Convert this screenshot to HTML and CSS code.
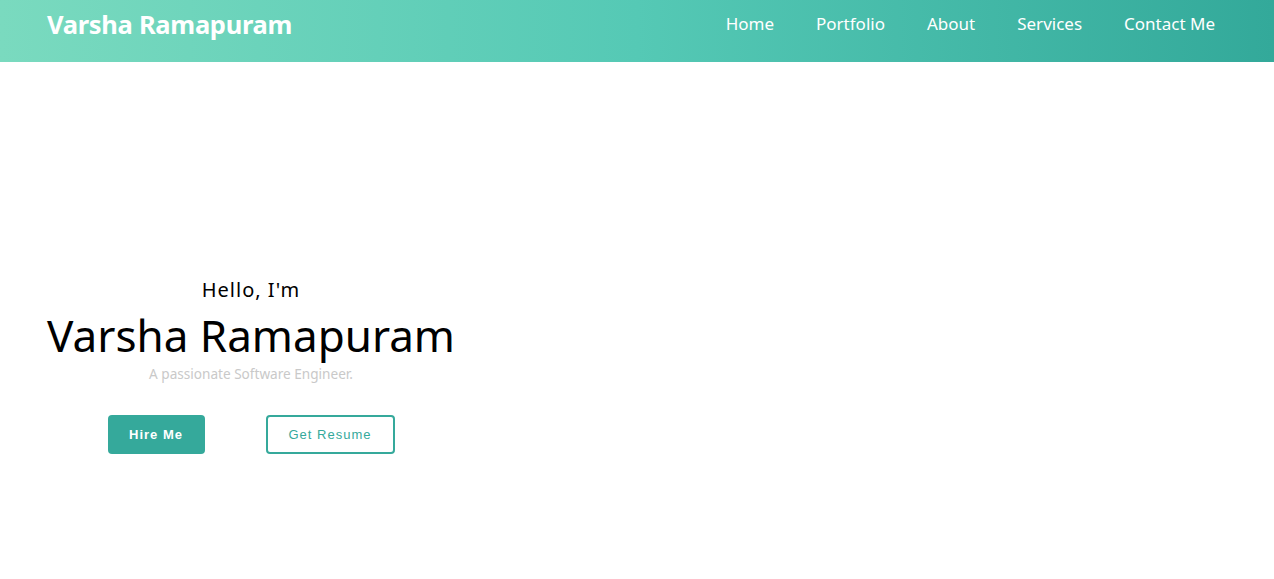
FILE: index.html
```html
<!DOCTYPE html>
<html lang="en">
<head>
<meta charset="utf-8">
<title>Varsha Ramapuram</title>
<link rel="stylesheet" href="styles.css">
</head>
<body>
<header class="topbar">
  <div class="logo">Varsha Ramapuram</div>
  <nav class="nav">
    <a href="#">Home</a>
    <a href="#">Portfolio</a>
    <a href="#">About</a>
    <a href="#">Services</a>
    <a href="#">Contact Me</a>
  </nav>
</header>
<main class="hero">
  <div class="intro">
    <p class="hello">Hello, I'm</p>
    <h1 class="name">Varsha Ramapuram</h1>
    <p class="tagline">A passionate Software Engineer.</p>
    <div class="actions">
      <a class="btn btn-fill" href="#">Hire Me</a>
      <a class="btn btn-outline" href="#">Get Resume</a>
    </div>
  </div>
</main>
</body>
</html>
```
FILE: styles.css
```css
* { box-sizing: border-box; }
html, body { margin: 0; padding: 0; background: #fff; }
body { font-family: "Noto Sans", "Open Sans", sans-serif; color: #000; }

.topbar {
  height: 62px;
  display: flex;
  align-items: center;
  justify-content: space-between;
  padding: 0 59px 12px 47px;
  background: linear-gradient(to right, #7adabf 0%, #55c9b5 50%, #33a99a 100%);
}
.logo {
  color: #fff;
  font-size: 25.5px;
  font-weight: 700;
  letter-spacing: -0.3px;
  line-height: 1;
}
.nav { display: flex; gap: 42px; padding-bottom: 4px; }
.nav a {
  color: #fff;
  text-decoration: none;
  font-size: 17px;
  line-height: 1;
}

.hero { padding: 214px 0 0 47px; height: 517px; }
.intro { display: inline-flex; flex-direction: column; align-items: center; }
.hello {
  margin: 0;
  font-size: 20px;
  letter-spacing: 1px;
  line-height: 28px;
}
.name {
  margin: 4px 0 0;
  font-size: 44px;
  font-weight: 400;
  line-height: 54px;
  letter-spacing: 0;
}
.tagline {
  margin: 3px 0 0;
  font-size: 13.6px;
  color: #c9c9c9;
  line-height: 18px;
}
.actions { display: flex; gap: 61px; margin-top: 32px; }
.btn {
  display: flex;
  align-items: center;
  justify-content: center;
  height: 39px;
  border-radius: 4px;
  font-family: "Liberation Sans", Arial, sans-serif;
  font-size: 13px;
  letter-spacing: 1px;
  text-decoration: none;
}
.btn-fill { width: 97px; background: #35a99b; color: #fff; font-weight: 700; }
.btn-outline { width: 129px; border: 2px solid #35a99b; color: #35a99b; }
```
